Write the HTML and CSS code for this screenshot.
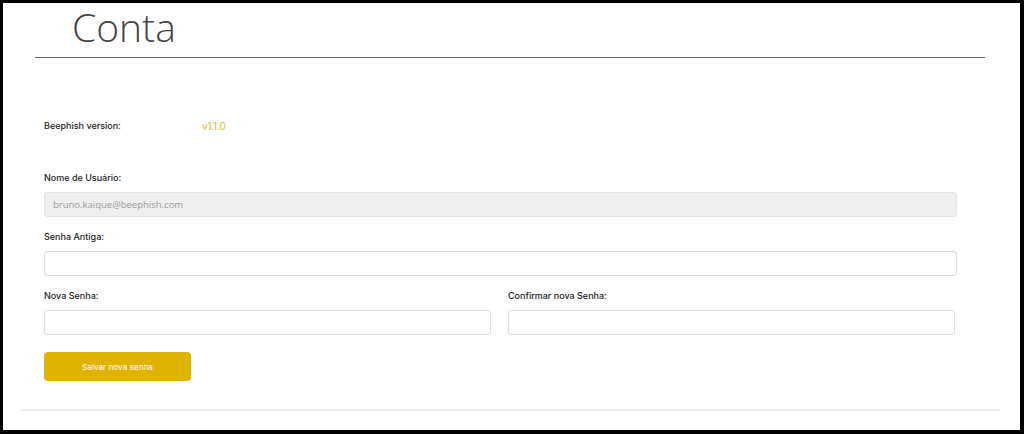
FILE: index.html
```html
<!DOCTYPE html>
<html lang="pt-BR">
<head>
<meta charset="utf-8">
<title>Conta</title>
<link rel="stylesheet" href="styles.css">
</head>
<body>
<div class="frame">
  <header class="page-header">
    <h1 class="page-title">Conta</h1>
  </header>
  <section class="account">
    <div class="version-row">
      <span class="label">Beephish version:</span>
      <span class="version">v1.1.0</span>
    </div>
    <div class="field">
      <label class="label">Nome de Usuário:</label>
      <div class="input input-disabled">bruno.kaique@beephish.com</div>
    </div>
    <div class="field">
      <label class="label">Senha Antiga:</label>
      <div class="input"></div>
    </div>
    <div class="field-row">
      <div class="field">
        <label class="label">Nova Senha:</label>
        <div class="input"></div>
      </div>
      <div class="field">
        <label class="label">Confirmar nova Senha:</label>
        <div class="input"></div>
      </div>
    </div>
    <button class="save-btn" type="button">Salvar nova senha</button>
  </section>
</div>
</body>
</html>
```
FILE: styles.css
```css
html, body {
  margin: 0;
  padding: 0;
  background: #000;
}
.frame {
  box-sizing: border-box;
  width: 1024px;
  height: 434px;
  border-style: solid;
  border-color: #000;
  border-width: 3px 4px 4px 3px;
  background: #fff;
  overflow: hidden;
  font-family: "Inter", "Noto Sans", sans-serif;
}
.page-header {
  margin: 0 35px 0 32px;
  border-bottom: 1px solid #6b6b6b;
  height: 55px;
  box-sizing: border-box;
}
.page-title {
  margin: 0;
  padding: 0 0 0 37px;
  font-family: "Open Sans", sans-serif;
  font-weight: 300;
  font-size: 39px;
  line-height: 48px;
  color: #444;
}
.account {
  margin: 61px 20px 0 17px;
  padding: 0 0 28px 24px;
  border-bottom: 2px solid #eeeeee;
}
.version-row {
  display: flex;
  align-items: center;
  height: 14px;
  margin-bottom: 38px;
}
.version-row .label {
  width: 158px;
}
.version {
  font-size: 10px;
  color: #e3b51f;
  letter-spacing: -0.2px;
}
.label {
  display: block;
  font-size: 9px;
  line-height: 14px;
  font-weight: 500;
  color: #222;
}
.field {
  display: flex;
  flex-direction: column;
  gap: 7px;
  width: 913px;
  margin-bottom: 13px;
}
.input {
  box-sizing: border-box;
  height: 25px;
  border: 1px solid #dcdcdc;
  border-radius: 3px;
  background: #fff;
  padding: 0 8px;
  display: flex;
  align-items: center;
  font-family: "Open Sans", sans-serif;
  font-size: 9.5px;
  color: #9a9a9a;
}
.input-disabled {
  background: #efefef;
  border-color: #e4e4e4;
}
.field-row {
  display: grid;
  grid-template-columns: 447px 447px;
  column-gap: 17px;
}
.field-row .field {
  width: auto;
}
.save-btn {
  display: block;
  margin-top: 4px;
  width: 147px;
  height: 29px;
  border: 0;
  border-radius: 4px;
  background: #dfb300;
  color: #fff;
  font-family: "Inter", "Noto Sans", sans-serif;
  font-size: 8.2px;
  font-weight: 400;
}
```
